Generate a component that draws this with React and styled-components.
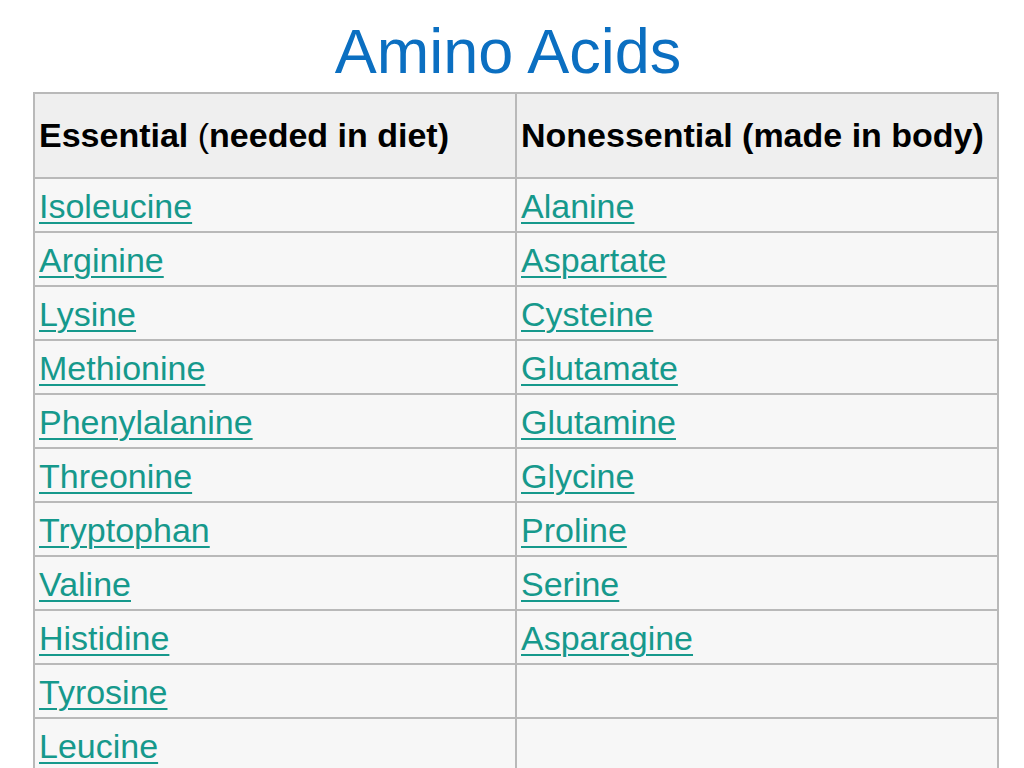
import React from "react";
import styled, { createGlobalStyle } from "styled-components";

const GlobalStyle = createGlobalStyle`
  html, body {
    margin: 0;
    padding: 0;
    background: #ffffff;
    font-family: "Liberation Sans", Arial, sans-serif;
  }
`;

const Slide = styled.div`
  width: 1024px;
  height: 768px;
  overflow: hidden;
  background: #ffffff;
`;

const Title = styled.h1`
  margin: 0;
  height: 92px;
  padding-top: 15px;
  box-sizing: border-box;
  text-align: center;
  font-size: 63px;
  font-weight: normal;
  line-height: 72px;
  color: #0b6fc1;
  padding-right: 8px;
`;

const Table = styled.table`
  margin-left: 33px;
  width: 966px;
  border-collapse: collapse;
  table-layout: fixed;
  font-family: "Liberation Sans", Arial, sans-serif;
`;

const HeadCell = styled.th`
  height: 85px;
  padding: 0 0 0 4px;
  box-sizing: border-box;
  border: 2px solid #b9b9b9;
  background: #efefef;
  text-align: left;
  font-size: 34px;
  font-weight: bold;
  color: #000000;
  white-space: nowrap;
`;

const Cell = styled.td`
  height: 54px;
  padding: 1px 0 0 4px;
  box-sizing: border-box;
  border: 2px solid #b9b9b9;
  background: #f7f7f7;
  font-size: 34px;
  line-height: 40px;
  vertical-align: middle;
`;

const Acid = styled.a`
  color: #16998c;
  text-decoration: underline;
  text-decoration-thickness: 2px;
  text-underline-offset: 4px;
`;

const Paren = styled.span`
  font-weight: normal;
`;

const rows = [
  ["Isoleucine", "Alanine"],
  ["Arginine", "Aspartate"],
  ["Lysine", "Cysteine"],
  ["Methionine", "Glutamate"],
  ["Phenylalanine", "Glutamine"],
  ["Threonine", "Glycine"],
  ["Tryptophan", "Proline"],
  ["Valine", "Serine"],
  ["Histidine", "Asparagine"],
  ["Tyrosine", null],
  ["Leucine", null],
];

export default function App() {
  return (
    <Slide>
      <GlobalStyle />
      <Title>Amino Acids</Title>
      <Table>
        <thead>
          <tr>
            <HeadCell>
              Essential <Paren>(</Paren>needed in diet)
            </HeadCell>
            <HeadCell>Nonessential (made in body)</HeadCell>
          </tr>
        </thead>
        <tbody>
          {rows.map(([essential, nonessential]) => (
            <tr key={essential}>
              <Cell>
                <Acid href="#">{essential}</Acid>
              </Cell>
              <Cell>{nonessential && <Acid href="#">{nonessential}</Acid>}</Cell>
            </tr>
          ))}
        </tbody>
      </Table>
    </Slide>
  );
}
